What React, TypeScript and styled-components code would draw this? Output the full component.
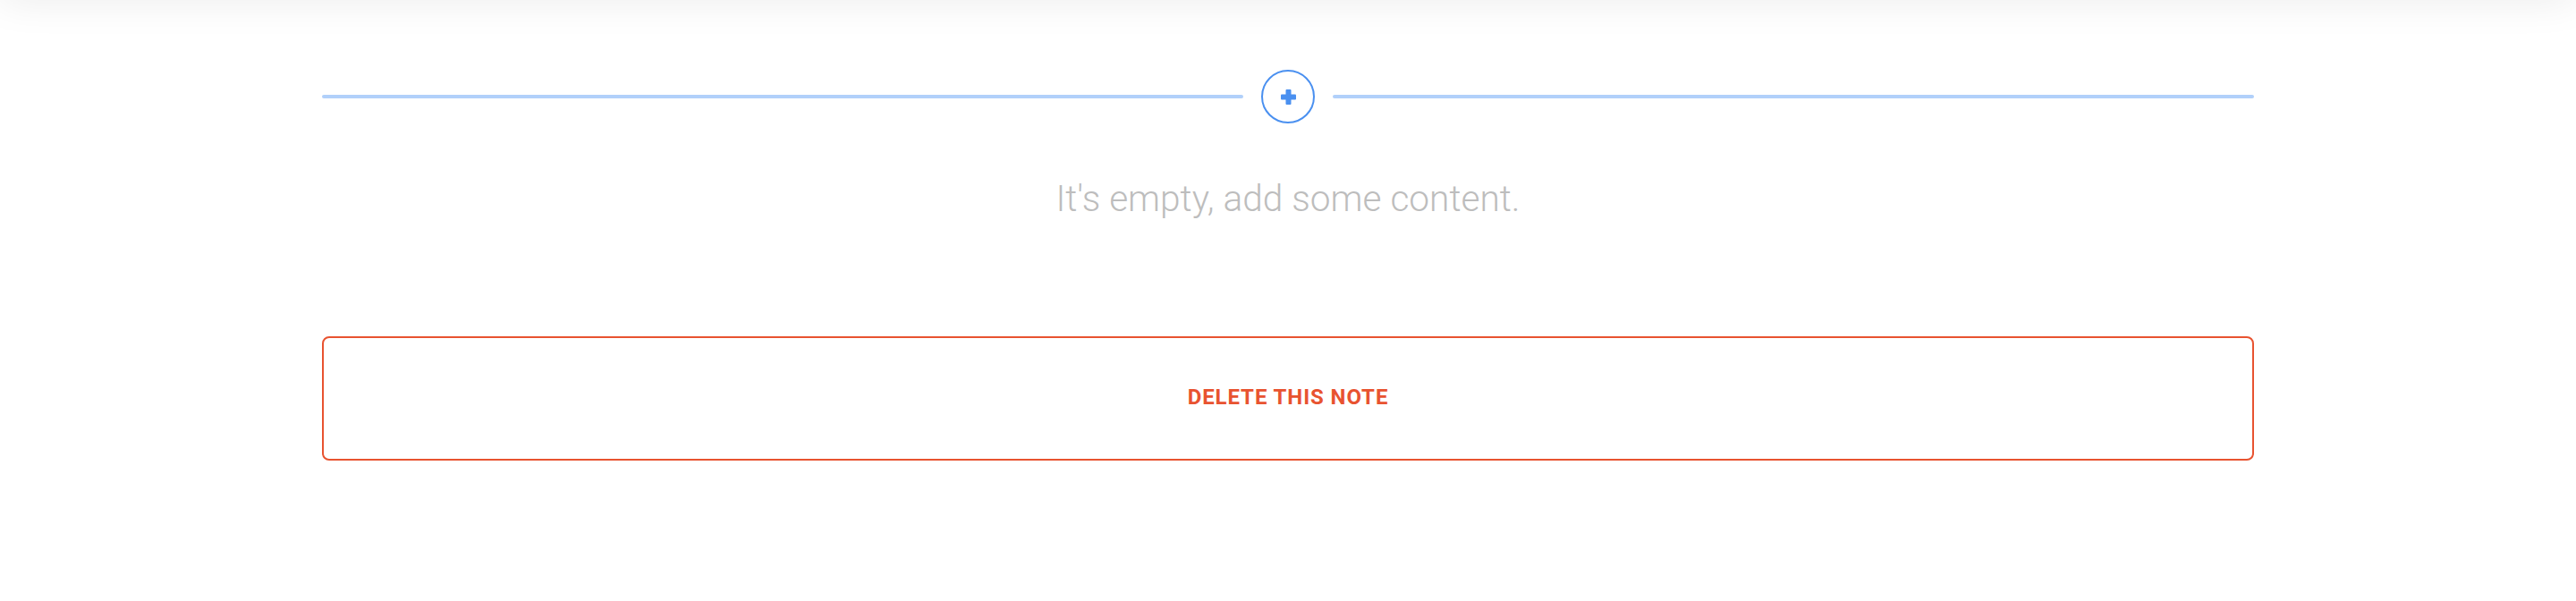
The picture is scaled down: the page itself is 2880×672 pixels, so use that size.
import React from "react";
import styled, { createGlobalStyle } from "styled-components";

const GlobalStyle = createGlobalStyle`
  html, body {
    margin: 0;
    padding: 0;
    background: #ffffff;
    font-family: Roboto, "Liberation Sans", sans-serif;
  }
`;

const Page = styled.div`
  width: 100%;
  min-height: 672px;
  overflow: hidden;
  display: flex;
  flex-direction: column;
  align-items: center;
`;

const HeaderShadow = styled.div`
  align-self: stretch;
  height: 40px;
  margin-top: -40px;
  box-shadow: 0 0 46px rgba(0, 0, 0, 0.085);
`;

const Content = styled.main`
  width: 2160px;
  display: flex;
  flex-direction: column;
  padding-top: 78px;
`;

const Divider = styled.div`
  display: flex;
  align-items: center;
  gap: 20px;
  height: 60px;
`;

const Line = styled.div`
  flex: 1;
  height: 4px;
  border-radius: 2px;
  background: #b1d0fa;
`;

const AddButton = styled.button`
  width: 60px;
  height: 60px;
  box-sizing: border-box;
  border-radius: 50%;
  border: 2px solid #4a90f0;
  background: #ffffff;
  padding: 0;
  display: flex;
  align-items: center;
  justify-content: center;
  color: #4a90f0;
  cursor: pointer;
`;

const EmptyText = styled.p`
  margin: 61px 0 0;
  text-align: center;
  font-family: Roboto, "Liberation Sans", sans-serif;
  font-weight: 300;
  font-size: 40.6px;
  line-height: 47px;
  color: #bdbdbd;
`;

const DeleteButton = styled.button`
  margin-top: 130px;
  height: 139px;
  box-sizing: border-box;
  border: 2px solid #e85330;
  border-radius: 8px;
  background: #ffffff;
  color: #e85330;
  font-family: Roboto, "Liberation Sans", sans-serif;
  font-weight: 700;
  font-size: 24px;
  letter-spacing: 0.9px;
  text-transform: uppercase;
  display: flex;
  align-items: center;
  justify-content: center;
  padding: 0 0 4px;
  cursor: pointer;
`;

const PlusIcon = () => (
  <svg width="17" height="17" viewBox="0 0 17 17">
    <rect x="0" y="5.5" width="17" height="6" rx="1" fill="currentColor" />
    <rect x="5.5" y="0" width="6" height="17" rx="1" fill="currentColor" />
  </svg>
);

export default function App() {
  return (
    <>
      <GlobalStyle />
      <Page>
        <HeaderShadow />
        <Content>
          <Divider>
            <Line />
            <AddButton aria-label="Add content">
              <PlusIcon />
            </AddButton>
            <Line />
          </Divider>
          <EmptyText>It's empty, add some content.</EmptyText>
          <DeleteButton>Delete this note</DeleteButton>
        </Content>
      </Page>
    </>
  );
}
